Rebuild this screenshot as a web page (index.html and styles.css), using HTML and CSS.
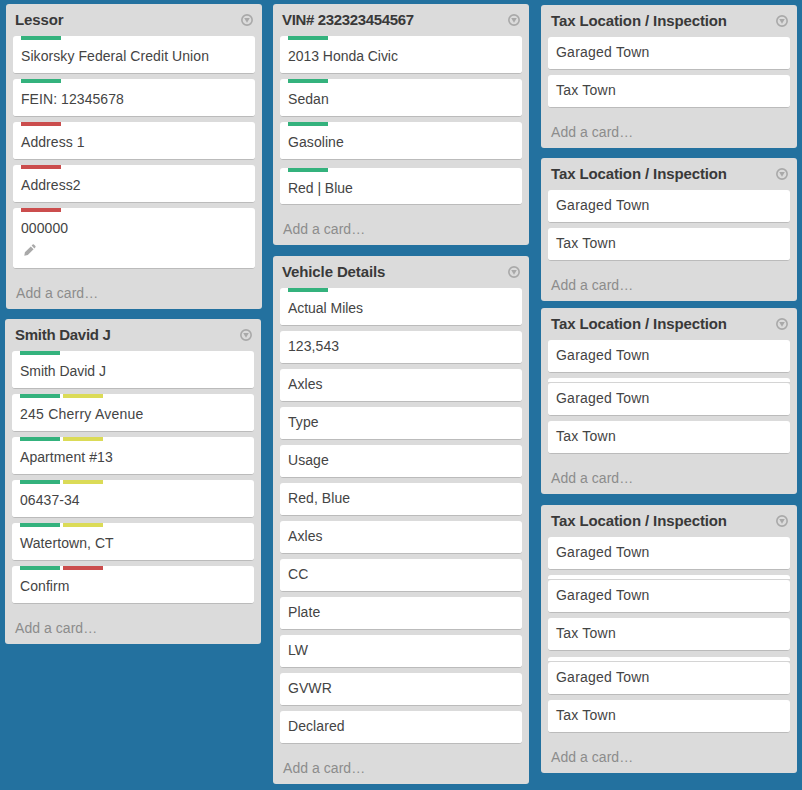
FILE: index.html
```
<!DOCTYPE html>
<html lang="en">
<head>
<meta charset="utf-8">
<title>Board</title>
<link rel="stylesheet" href="styles.css">
</head>
<body>
<svg class="defs" width="0" height="0" aria-hidden="true">
  <symbol id="menu" viewBox="0 0 12 12">
    <circle cx="6" cy="6" r="5.15" fill="none" stroke="currentColor" stroke-width="1.6"/>
    <path d="M3.2 3.9h5.6L6 8.8z" fill="currentColor"/>
  </symbol>
  <symbol id="pencil" viewBox="0 0 12 12">
    <path d="M.3 11.7 .9 8.2 6.8 2.4 9.6 5.2 3.8 11.1zM7.6 1.6 8.7.6Q9.3.1 9.9.6L11.4 2.1Q11.9 2.7 11.4 3.3L10.4 4.4z" fill="currentColor"/>
  </symbol>
</svg>
<main class="board">
  <div class="column">
    <section class="list">
      <header class="head"><h2 class="title">Lessor</h2><svg class="menu"><use href="#menu"/></svg></header>
      <div class="card"><div class="labels"><i class="green"></i></div><p>Sikorsky Federal Credit Union</p></div>
      <div class="card"><div class="labels"><i class="green"></i></div><p>FEIN: 12345678</p></div>
      <div class="card"><div class="labels"><i class="red"></i></div><p>Address 1</p></div>
      <div class="card"><div class="labels"><i class="red"></i></div><p>Address2</p></div>
      <div class="card card-badged"><div class="labels"><i class="red"></i></div><p>000000</p><svg class="pencil"><use href="#pencil"/></svg></div>
      <footer class="add">Add a card…</footer>
    </section>
    <section class="list list-smith">
      <header class="head"><h2 class="title title-inset title-name">Smith David J</h2><svg class="menu"><use href="#menu"/></svg></header>
      <div class="card"><div class="labels"><i class="green"></i></div><p class="narrow">Smith David J</p></div>
      <div class="card"><div class="labels"><i class="green"></i><i class="yellow"></i></div><p class="wide">245 Cherry Avenue</p></div>
      <div class="card"><div class="labels"><i class="green"></i><i class="yellow"></i></div><p>Apartment #13</p></div>
      <div class="card"><div class="labels"><i class="green"></i><i class="yellow"></i></div><p>06437-34</p></div>
      <div class="card"><div class="labels"><i class="green"></i><i class="yellow"></i></div><p>Watertown, CT</p></div>
      <div class="card"><div class="labels"><i class="green"></i><i class="red"></i></div><p>Confirm</p></div>
      <footer class="add">Add a card…</footer>
    </section>
  </div>
  <div class="column column-vehicle">
    <section class="list">
      <header class="head"><h2 class="title title-vin">VIN# 232323454567</h2><svg class="menu"><use href="#menu"/></svg></header>
      <div class="card"><div class="labels"><i class="green"></i></div><p class="narrow">2013 Honda Civic</p></div>
      <div class="card"><div class="labels"><i class="green"></i></div><p>Sedan</p></div>
      <div class="card"><div class="labels"><i class="green"></i></div><p>Gasoline</p></div>
      <div class="card card-color"><div class="labels"><i class="green"></i></div><p class="narrow">Red | Blue</p></div>
      <footer class="add">Add a card…</footer>
    </section>
    <section class="list list-details">
      <header class="head"><h2 class="title">Vehicle Details</h2><svg class="menu"><use href="#menu"/></svg></header>
      <div class="card"><div class="labels"><i class="green"></i></div><p class="narrow">Actual Miles</p></div>
      <div class="card"><p>123,543</p></div>
      <div class="card"><p>Axles</p></div>
      <div class="card"><p>Type</p></div>
      <div class="card"><p>Usage</p></div>
      <div class="card"><p>Red, Blue</p></div>
      <div class="card"><p>Axles</p></div>
      <div class="card"><p>CC</p></div>
      <div class="card"><p>Plate</p></div>
      <div class="card"><p>LW</p></div>
      <div class="card"><p>GVWR</p></div>
      <div class="card"><p>Declared</p></div>
      <footer class="add">Add a card…</footer>
    </section>
  </div>
  <div class="column column-tax">
    <section class="list">
      <header class="head"><h2 class="title title-inset">Tax Location / Inspection</h2><svg class="menu"><use href="#menu"/></svg></header>
      <div class="card"><p>Garaged Town</p></div>
      <div class="card"><p>Tax Town</p></div>
      <footer class="add">Add a card…</footer>
    </section>
    <section class="list list-second">
      <header class="head"><h2 class="title title-inset">Tax Location / Inspection</h2><svg class="menu"><use href="#menu"/></svg></header>
      <div class="card"><p>Garaged Town</p></div>
      <div class="card"><p>Tax Town</p></div>
      <footer class="add">Add a card…</footer>
    </section>
    <section class="list list-third">
      <header class="head"><h2 class="title title-inset">Tax Location / Inspection</h2><svg class="menu"><use href="#menu"/></svg></header>
      <div class="card"><p>Garaged Town</p></div>
      <div class="sliver"></div>
      <div class="card"><p>Garaged Town</p></div>
      <div class="card"><p>Tax Town</p></div>
      <footer class="add">Add a card…</footer>
    </section>
    <section class="list list-fourth">
      <header class="head"><h2 class="title title-inset">Tax Location / Inspection</h2><svg class="menu"><use href="#menu"/></svg></header>
      <div class="card"><p>Garaged Town</p></div>
      <div class="sliver"></div>
      <div class="card"><p>Garaged Town</p></div>
      <div class="card"><p>Tax Town</p></div>
      <div class="sliver sliver-low"></div>
      <div class="card"><p>Garaged Town</p></div>
      <div class="card"><p>Tax Town</p></div>
      <footer class="add">Add a card…</footer>
    </section>
  </div>
</main>
</body>
</html>
```
FILE: styles.css
```
* { box-sizing: border-box; }
body {
  margin: 0;
  background: #23719f;
  color: #444;
  font: 14px/18px "Liberation Sans", Arial, sans-serif;
}
.defs { display: none; }
.board { display: flex; align-items: flex-start; height: 790px; padding: 4px 0 0 6px; overflow: hidden; }
.column { flex: none; width: 256px; }
.column-vehicle { margin-left: 11px; }
.column-tax { margin: 1px 0 0 12px; }
.list { width: 256px; padding: 0 7px; background: #dbdbdb; border-radius: 3px; }
.list-smith { margin: 10px 0 0 -1px; }
.list-details { margin-top: 11px; }
.list-second { margin-top: 10px; }
.list-third { margin-top: 7px; }
.list-fourth { margin-top: 11px; }
.head { display: flex; justify-content: space-between; height: 32px; padding: 7px 2px 0; }
.title { margin: 0; font-size: 15px; line-height: 18px; font-weight: 700; color: #393939; white-space: nowrap; letter-spacing: -.12px; }
.title-inset { margin-left: 1px; }
.title-name { letter-spacing: -.27px; }
.title-vin { letter-spacing: -.34px; }
.menu { width: 12px; height: 12px; margin-top: 3px; color: #a9a9a9; }
.card { height: 33px; margin-bottom: 5px; padding: 6px 8px 0; background: #fff; border-bottom: 1px solid #bbb; border-radius: 3px; }
.card:has(.labels) { height: 38px; padding-top: 0; }
.card p { margin: 0; white-space: nowrap; letter-spacing: .07px; }
.column-tax .card p, .card p.wide { letter-spacing: .23px; }
.card p.narrow { letter-spacing: -.04px; }
.labels { display: flex; gap: 3px; height: 4px; margin-bottom: 7px; }
.labels i { width: 40px; height: 4px; }
.green { background: #34b27d; }
.yellow { background: #dbdb57; }
.red { background: #cb4d4d; }
.card.card-badged { height: 61px; }
.pencil { display: block; width: 12px; height: 12px; margin: 7px 0 0 3px; color: #a9a9a9; }
.card.card-color { height: 37px; margin-top: 8px; }
.sliver { height: 5px; background: #fff; border-bottom: 1px solid #d4d4d4; border-radius: 3px 3px 0 0; }
.sliver-low { margin-top: 6px; }
.add { height: 35px; padding: 10px 3px 0; color: #8c8c8c; letter-spacing: .05px; }
```
